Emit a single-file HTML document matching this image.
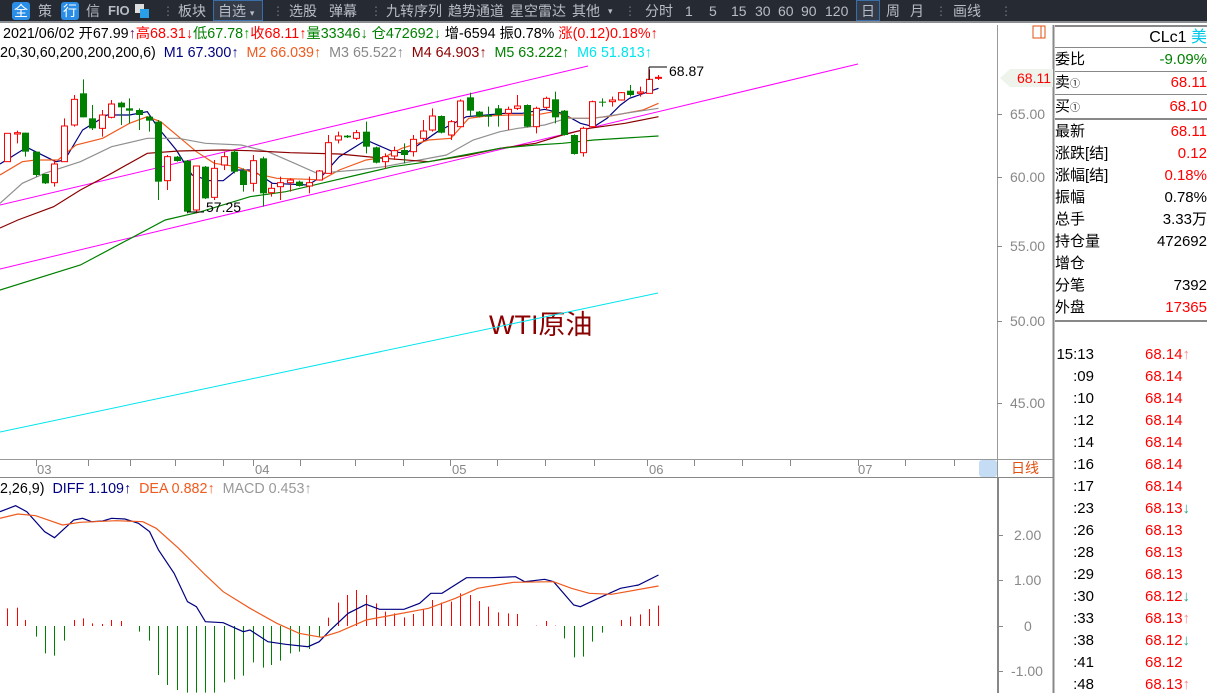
<!DOCTYPE html>
<html><head><meta charset="utf-8"><style>
*{margin:0;padding:0;box-sizing:border-box}
body{width:1207px;height:693px;overflow:hidden;background:#fff;font-family:"Liberation Sans","Noto Sans CJK SC",sans-serif;position:relative}
.tb{position:absolute;left:0;top:0;width:1207px;height:23px;background:#262a33;border-bottom:2px solid #8a8d92}
.tb span{position:absolute;top:2px;font-size:14px;color:#b8bcc4;line-height:18px;white-space:nowrap}
.tb .bx{background:#2a8ee6;color:#fff;border-radius:3px;width:18px;height:18px;text-align:center;top:2px}
.tb .sep{color:#777;font-size:12px}
.ab{position:absolute;white-space:nowrap;font-size:13px;line-height:16px}
.r{color:#f00}.g{color:#008000}
.rp{position:absolute;left:1055px;font-size:15px;line-height:22px;width:152px}
.rp div{height:22px;position:relative}
.rp b{font-weight:normal;position:absolute;right:0;top:0}
.yl{position:absolute;left:1010px;font-size:14px;color:#888}
</style></head><body>
<div class="tb">
<span class="bx" style="left:12px">全</span><span style="left:38px">策</span><span class="bx" style="left:61px">行</span><span style="left:86px">信</span><span style="left:108px;font-weight:bold;font-size:13px">FIO</span>
<span style="left:135px;top:4px;width:9px;height:9px;background:#ddd"></span><span style="left:140px;top:9px;width:9px;height:9px;background:#2a9ee6"></span>
<span class="sep" style="left:162px">⋮</span><span style="left:178px">板块</span>
<span style="left:213px;top:0;width:50px;height:21px;border:1px solid #3a6ea8;background:#343b48;padding:1px 0 0 4px">自选 <small style="font-size:9px">▾</small></span>
<span class="sep" style="left:272px">⋮</span><span style="left:289px">选股</span><span style="left:329px">弹幕</span><span class="sep" style="left:370px">⋮</span>
<span style="left:386px">九转序列</span><span style="left:448px">趋势通道</span><span style="left:510px">星空雷达</span><span style="left:572px">其他</span><span style="left:608px;font-size:9px">▾</span><span class="sep" style="left:624px">⋮</span>
<span style="left:645px">分时</span><span style="left:685px">1</span><span style="left:709px">5</span><span style="left:731px">15</span><span style="left:755px">30</span><span style="left:778px">60</span><span style="left:801px">90</span><span style="left:825px">120</span>
<span style="left:856px;top:0;width:24px;height:21px;border:1px solid #3a6ea8;background:#343b48;text-align:center;padding-top:1px">日</span><span style="left:886px">周</span><span style="left:910px">月</span><span class="sep" style="left:935px">⋮</span><span style="left:953px">画线</span><span class="sep" style="left:1000px">⋮</span>
</div>
<div class="ab" style="left:3px;top:26px;font-size:14.3px">2021/06/02 开67.99<span style="color:#606">↑</span><span class="r">高68.31↓</span><span class="g">低67.78<span style="color:#0a0">↑</span></span><span class="r">收68.11↑</span><span class="g">量33346↓ 仓472692↓</span> 增-6594 振0.78% <span class="r">涨(0.12)0.18%↑</span></div>
<div class="ab" style="left:0;top:45px;font-size:14.3px">20,30,60,200,200,200,6) &nbsp;<span style="color:#000080">M1 67.300↑</span> &nbsp;<span style="color:#f05a1e">M2 66.039↑</span> &nbsp;<span style="color:#888">M3 65.522↑</span> &nbsp;<span style="color:#8b0000">M4 64.903↑</span> &nbsp;<span style="color:#008000">M5 63.222↑</span> &nbsp;<span style="color:#00e5ee">M6 51.813↑</span></div>
<div class="ab" style="left:0;top:481px;font-size:14.3px">2,26,9) &nbsp;<span style="color:#000080">DIFF 1.109↑</span> &nbsp;<span style="color:#f05a1e">DEA 0.882↑</span> &nbsp;<span style="color:#999">MACD 0.453↑</span></div>
<div style="position:absolute;left:489px;top:303px;font-size:27px;color:#8b0000">WTI原油</div>
<svg id="sv" width="1207" height="693" style="position:absolute;left:0;top:0" xmlns="http://www.w3.org/2000/svg">
<line x1="997.5" y1="25" x2="997.5" y2="693" stroke="#999"/>
<line x1="1053.5" y1="25" x2="1053.5" y2="693" stroke="#888" stroke-width="2"/>
<line x1="0" y1="459.5" x2="1053" y2="459.5" stroke="#999"/>
<line x1="0" y1="477.5" x2="1053" y2="477.5" stroke="#888"/>
<line x1="998" y1="477.5" x2="998" y2="693" stroke="#888" stroke-width="2"/>
<rect x="1033" y="26" width="12" height="12" fill="none" stroke="#e05010"/><line x1="1041" y1="26" x2="1041" y2="38" stroke="#e05010"/>
<rect x="979" y="460" width="18" height="17" rx="3" fill="#c4dcf4"/>
<polygon points="1000,78 1010,69 1053,69 1053,87 1010,87" fill="#eef4ec"/>
<g id="g"></g>
</svg>
<div class="ab r" style="left:1017px;top:70px;font-size:14px">68.11</div>
<div class="yl" style="top:106px">65.00</div><div class="yl" style="top:169px">60.00</div><div class="yl" style="top:238px">55.00</div><div class="yl" style="top:313px">50.00</div><div class="yl" style="top:395px">45.00</div>
<div class="yl" style="top:527px;left:1014px">2.00</div><div class="yl" style="top:572px;left:1014px">1.00</div><div class="yl" style="top:618px;left:1024px">0</div><div class="yl" style="top:663px;left:1011px">-1.00</div>
<div class="ab" style="left:1011px;top:460px;color:#e05010;font-size:14px">日线</div>
<div class="ab" style="left:37px;top:462px;color:#888">03</div><div class="ab" style="left:255px;top:462px;color:#888">04</div><div class="ab" style="left:452px;top:462px;color:#888">05</div><div class="ab" style="left:649px;top:462px;color:#888">06</div><div class="ab" style="left:858px;top:462px;color:#888">07</div>
<div class="ab" style="left:206px;top:199px;font-size:14px">57.25</div><div class="ab" style="left:669px;top:63px;font-size:14px">68.87</div>
<div style="position:absolute;left:1055px;top:25px;width:152px;height:23px;border-top:2px solid #888;border-bottom:1px solid #888;font-size:16px;text-align:right;line-height:22px">CLc1 <span style="color:#00c8e8">美</span></div>
<div class="rp" style="top:49px;border-bottom:1px solid #888"><div>委比<b class="g">-9.09%</b></div></div>
<div class="rp" style="top:72px;border-bottom:1px solid #888"><div>卖<small style="font-size:10px">①</small><b class="r">68.11</b></div></div>
<div class="rp" style="top:96px;border-bottom:2px solid #888"><div>买<small style="font-size:10px">①</small><b class="r">68.10</b></div></div>
<div class="rp" style="top:121px;border-bottom:2px solid #888;height:201px">
<div>最新<b class="r">68.11</b></div><div>涨跌[结]<b class="r">0.12</b></div><div>涨幅[结]<b class="r">0.18%</b></div><div>振幅<b>0.78%</b></div><div>总手<b>3.33万</b></div><div>持仓量<b>472692</b></div><div>增仓</div><div>分笔<b>7392</b></div><div>外盘<b class="r">17365</b></div></div>
<div class="rp" style="top:344px;font-size:15px" id="tl"></div>
<script>
var NS="http://www.w3.org/2000/svg",g=document.getElementById("g");
function el(t,a){var e=document.createElementNS(NS,t);for(var k in a)e.setAttribute(k,a[k]);g.appendChild(e);return e}
function ln(x1,y1,x2,y2,c,w){el("line",{x1:x1,y1:y1,x2:x2,y2:y2,stroke:c,"stroke-width":w||1})}
[36,88,130,175,223,253,300,355,403,450,497,545,594,647,694,742,790,858,905,954].forEach(function(x){ln(x+.5,460,x+.5,466,"#888")});
[114,177,246,321,403].forEach(function(y){ln(997,y+.5,1002,y+.5,"#888")});
[535,580,626,671].forEach(function(y){ln(998,y+.5,1003,y+.5,"#888")});
ln(0,205,588,66,"#ff00ff");ln(0,269,858,64,"#ff00ff");ln(0,432,658,293,"#00e5ee");
var X=2.24;
function pl(pts,c,yo){var s=pts.map(function(p){return (p[0]/X).toFixed(1)+","+(yo+p[1]/3).toFixed(1)}).join(" ");el("polyline",{points:s,fill:"none",stroke:c,"stroke-width":1.2})}
var cd=[[15,"r",220,305,220,305],[37,"r",218,222,212,250],[57,"g",218,275,218,290],[80,"g",275,345,275,350],[100,"g",342,370,342,372],[122,"r",312,368,300,380],[143,"r",198,305,175,305],[165,"r",118,195,105,200],[185,"g",100,172,58,172],[207,"g",175,205,135,210],[228,"r",165,205,150,230],[248,"r",132,172,120,175],[270,"g",128,142,125,195],[290,"g",145,152,115,190],[312,"g",150,165,145,210],[333,"g",170,182,165,215],[355,"g",185,365,180,420],[375,"r",290,362,285,390],[397,"g",290,303,288,305],[418,"g",302,455,300,460],[440,"r",318,450,318,460],[460,"g",320,415,318,417],[480,"r",325,412,300,420],[502,"r",290,315,275,330],[524,"g",275,335,270,340],[545,"g",332,375,325,395],[567,"r",302,370,285,395],[588,"g",295,400,290,440],[608,"r",385,398,370,410],[628,"r",368,380,350,420],[650,"r",360,368,355,395],[670,"g",365,378,362,380],[693,"r",368,378,350,400],[715,"r",333,360,330,362],[735,"r",248,340,225,340],[757,"r",228,240,215,250],[777,"g",227,232,225,234],[798,"r",218,235,210,240],[820,"g",215,260,185,280],[842,"g",262,308,260,310],[862,"r",290,305,280,325],[883,"r",272,288,260,300],[905,"g",270,285,250,310],[925,"r",238,275,225,290],[947,"r",213,235,180,245],[967,"r",168,210,145,215],[988,"g",168,218,166,220],[1010,"r",185,225,180,240],[1030,"r",123,200,118,200],[1052,"g",112,152,98,170],[1073,"g",155,170,153,172],[1093,"g",165,170,140,200],[1115,"g",145,165,135,200],[1137,"r",148,160,140,210],[1158,"r",138,145,105,150],[1180,"g",135,200,133,202],[1200,"r",145,200,140,220],[1222,"r",115,142,110,150],[1243,"g",118,172,95,190],[1263,"g",152,225,150,227],[1285,"g",225,282,223,284],[1305,"r",205,278,200,290],[1327,"r",125,200,122,200],[1348,"g",125,128,115,140],[1370,"r",120,125,110,140],[1390,"r",98,120,96,122],[1412,"g",92,105,75,110],[1433,"r",96,100,80,110],[1453,"r",58,100,28,100],[1475,"r",52,54,45,60]];
pl([[0,312],[60,262],[125,305],[145,300],[185,210],[240,165],[290,165],[330,155],[355,205],[395,270],[430,345],[470,362],[500,362],[530,330],[565,330],[610,370],[690,375],[720,350],[760,290],[820,240],[880,275],[910,280],[980,215],[1045,170],[1090,165],[1130,160],[1170,160],[1220,148],[1260,160],[1300,190],[1330,200],[1360,175],[1390,135],[1410,115],[1475,85]],"#000080",60);
pl([[0,345],[50,305],[80,300],[130,300],[170,255],[230,235],[290,190],[330,170],[360,185],[400,230],[440,275],[480,310],[530,320],[570,340],[620,355],[690,358],[720,360],[760,330],[820,300],[860,292],[900,265],[960,240],[1010,235],[1050,175],[1090,168],[1140,165],[1200,165],[1240,155],[1280,175],[1320,175],[1360,170],[1440,150],[1475,130]],"#f05a1e",60);
pl([[0,430],[50,370],[100,340],[180,305],[250,260],[330,235],[400,235],[460,250],[540,255],[600,275],[660,310],[710,340],[800,330],[860,320],[940,300],[1000,285],[1060,240],[1120,215],[1160,205],[1220,195],[1270,175],[1330,175],[1400,160],[1475,145]],"#909090",60);
pl([[0,504],[40,480],[120,440],[180,390],[250,340],[330,280],[400,273],[500,270],[560,272],[650,278],[760,282],[860,295],[960,305],[1050,285],[1120,265],[1200,250],[1260,225],[1320,205],[1400,190],[1475,170]],"#8b0000",60);
pl([[0,690],[180,615],[370,480],[450,455],[560,410],[640,395],[720,370],[800,345],[880,320],[960,305],[1040,285],[1120,265],[1200,255],[1260,250],[1330,240],[1475,228]],"#008000",60);
cd.forEach(function(c){var x=Math.round(c[0]/X)+.5,t=60+c[2]/3,b=60+c[3]/3,h=60+c[4]/3,l=60+c[5]/3,col=c[1]=="r"?"#f00":"#008000";
ln(x,h,x,l,col);if(c[1]=="g")el("rect",{x:x-3.5,y:t,width:7,height:Math.max(1,b-t),fill:col});else el("rect",{x:x-3,y:t,width:6,height:Math.max(1,b-t),fill:"#fff",stroke:col})});
ln(187,212,204,212,"#000");ln(649,67,667,67,"#000");ln(649,67,649,80,"#000");
var hb=[[15,475],[37,473],[57,510],[80,560],[100,610],[122,617],[143,572],[165,510],[185,505],[207,520],[228,522],[248,510],[270,513],[290,528],[312,545],[333,572],[355,675],[375,705],[397,720],[418,728],[440,728],[460,728],[480,728],[502,697],[524,688],[545,677],[567,637],[588,653],[608,645],[628,632],[650,610],[670,605],[693,597],[715,560],[735,503],[757,458],[777,435],[798,420],[820,435],[842,460],[862,485],[883,490],[905,502],[925,492],[947,478],[967,450],[988,458],[1010,455],[1030,430],[1052,435],[1073,453],[1093,470],[1115,487],[1137,490],[1158,492],[1200,527],[1222,513],[1243,527],[1263,565],[1285,622],[1305,620],[1327,575],[1348,548],[1390,510],[1412,500],[1433,493],[1453,477],[1475,467]];
hb.forEach(function(h){var x=Math.round(h[0]/X)+.5,y=450+h[1]/3;ln(x,626,x,y,y>626?"#008000":"#f00")});
pl([[0,185],[35,167],[60,185],[100,245],[122,263],[145,235],[165,210],[185,205],[205,215],[230,213],[250,205],[280,207],[310,220],[335,245],[355,300],[390,370],[420,455],[440,470],[460,515],[500,518],[545,545],[560,540],[600,575],[640,583],[690,590],[715,575],[740,540],[780,490],[820,463],[850,478],[905,478],[940,460],[965,430],[990,430],[1045,383],[1100,383],[1155,380],[1175,395],[1220,388],[1240,395],[1285,465],[1300,470],[1340,445],[1390,415],[1430,405],[1475,375]],"#000080",450);
pl([[0,205],[40,192],[80,197],[140,225],[180,217],[260,212],[320,215],[350,235],[400,295],[460,375],[500,425],[560,475],[620,520],[670,550],[720,562],[760,545],[820,510],[880,495],[960,475],[1020,445],[1070,415],[1150,397],[1240,395],[1280,415],[1320,430],[1370,433],[1475,408]],"#f05a1e",450);
var tk=[["15:13","68.14","↑"],[":09","68.14",""],[":10","68.14",""],[":12","68.14",""],[":14","68.14",""],[":16","68.14",""],[":17","68.14",""],[":23","68.13","↓"],[":26","68.13",""],[":28","68.13",""],[":29","68.13",""],[":30","68.12","↓"],[":33","68.13","↑"],[":38","68.12","↓"],[":41","68.12",""],[":48","68.13","↑"]];
var s="";tk.forEach(function(t){s+='<div><span style="position:absolute;right:113px">'+t[0]+'</span><span style="position:absolute;left:90px;color:#f00">'+t[1]+'<span style="color:'+(t[2]=="↓"?"#2a8":"#f88")+'">'+t[2]+'</span></span></div>'});
document.getElementById("tl").innerHTML=s;
</script>
</body></html>
